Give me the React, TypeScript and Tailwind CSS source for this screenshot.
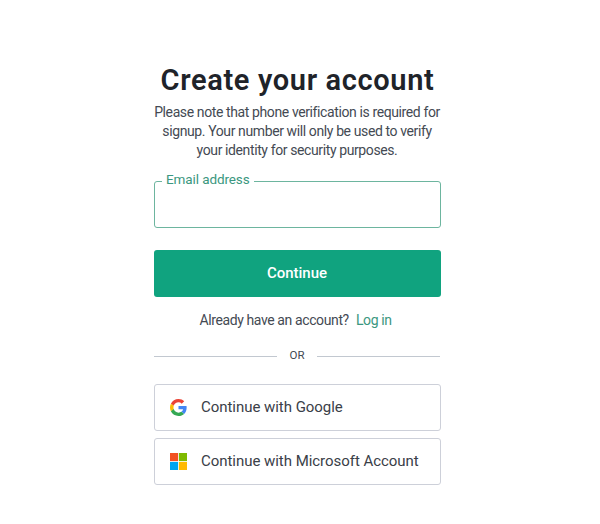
import type { ReactNode } from "react";

const GoogleIcon = () => (
  <svg viewBox="0 0 48 48" className="mb-px size-[17px]" aria-hidden="true">
    <path fill="#EA4335" d="M24 9.5c3.54 0 6.71 1.22 9.21 3.6l6.85-6.85C35.9 2.38 30.47 0 24 0 14.62 0 6.51 5.38 2.56 13.22l7.98 6.19C12.43 13.72 17.74 9.5 24 9.5z" />
    <path fill="#4285F4" d="M46.98 24.55c0-1.57-.15-3.09-.38-4.55H24v9.02h12.94c-.58 2.96-2.26 5.48-4.78 7.18l7.73 6c4.51-4.18 7.09-10.36 7.09-17.65z" />
    <path fill="#FBBC05" d="M10.53 28.59c-.48-1.45-.76-2.99-.76-4.59s.27-3.14.76-4.59l-7.98-6.19C.92 16.46 0 20.12 0 24s.92 7.54 2.56 10.78l7.97-6.19z" />
    <path fill="#34A853" d="M24 48c6.48 0 11.93-2.13 15.89-5.81l-7.73-6c-2.15 1.45-4.92 2.3-8.16 2.3-6.26 0-11.57-4.22-13.47-9.91l-7.98 6.19C6.51 42.62 14.62 48 24 48z" />
  </svg>
);

const MicrosoftIcon = () => (
  <svg viewBox="0 0 21 21" className="mb-px size-[17px]" aria-hidden="true">
    <path fill="#f25022" d="M0 0h10v10H0z" />
    <path fill="#7fba00" d="M11 0h10v10H11z" />
    <path fill="#00a4ef" d="M0 11h10v10H0z" />
    <path fill="#ffb900" d="M11 11h10v10H11z" />
  </svg>
);

const SocialButton = ({ icon, children }: { icon: ReactNode; children: ReactNode }) => (
  <button
    type="button"
    className="flex h-[47px] w-full items-center gap-[14px] rounded-[3px] border border-[#cdd0d9] pl-[15px] text-[15px] tracking-[-0.04px] text-[#3a4048]"
  >
    {icon}
    <span className="whitespace-nowrap">{children}</span>
  </button>
);

export default function App() {
  return (
    <main className="h-[524px] w-[600px] bg-white pl-[154px] pt-[62px] font-['Roboto',sans-serif]">
      <div className="w-[287px]">
        <h1 className="whitespace-nowrap text-center text-[29px] font-semibold leading-9 tracking-[0.64px] text-[#202329]">
          Create your account
        </h1>
        <p className="mt-[5px] whitespace-nowrap pr-px text-center text-[14px] leading-[19px] tracking-[-0.39px] text-[#444a53]">
          Please note that phone verification is required for
          <br />
          signup. Your number will only be used to verify
          <br />
          your identity for security purposes.
        </p>

        <form onSubmit={(e) => e.preventDefault()}>
          <div className="relative mt-[21px]">
            <input
              id="email"
              type="email"
              className="block h-[47px] w-full rounded-[3px] border border-[#6db59f] px-3 text-[15px] outline-none"
            />
            <label
              htmlFor="email"
              className="absolute -top-[11px] left-2 whitespace-nowrap bg-white px-[4px] text-[13.5px] leading-[19px] tracking-[-0.1px] text-[#3b9780]"
            >
              Email address
            </label>
          </div>
          <button
            type="submit"
            className="mt-[22px] block h-[47px] w-full rounded-[3px] bg-[#10a37f] pr-px text-[15px] font-medium text-white"
          >
            Continue
          </button>
        </form>

        <p className="mt-[14px] whitespace-nowrap pr-[4px] text-center text-[14px] leading-[19px] tracking-[-0.39px] text-[#444a53]">
          Already have an account? <a className="ml-1 text-[#3b9780]">Log in</a>
        </p>

        <div className="mt-[17px] flex h-[18px] items-center pr-px text-[11.5px] text-[#444a53]">
          <span className="h-px flex-1 bg-[#c2c8d0]" />
          <span className="w-[40px] text-center">OR</span>
          <span className="h-px flex-1 bg-[#c2c8d0]" />
        </div>

        <div className="mt-[19px] flex flex-col gap-[7px]">
          <SocialButton icon={<GoogleIcon />}>Continue with Google</SocialButton>
          <SocialButton icon={<MicrosoftIcon />}>Continue with Microsoft Account</SocialButton>
        </div>
      </div>
    </main>
  );
}
